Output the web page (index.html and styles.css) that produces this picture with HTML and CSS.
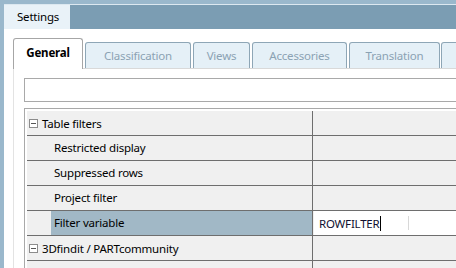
FILE: index.html
```html
<!DOCTYPE html>
<html lang="en">
<head>
    <meta charset="UTF-8">
    <title>Settings</title>
    <link rel="stylesheet" href="styles.css">
</head>
<body>
    <div class="window">
        <div class="titlebar">
            <div class="title-tab">Settings</div>
        </div>
        <div class="content">
            <div class="tabs">
                <div class="tab active">General</div>
                <div class="tab w-class">Classification</div>
                <div class="tab w-views">Views</div>
                <div class="tab w-acc">Accessories</div>
                <div class="tab w-trans">Translation</div>
                <div class="tab w-more"></div>
            </div>
            <div class="panel">
                <div class="search"></div>
                <div class="grid">
                    <div class="row">
                        <div class="name group"><span class="toggle"></span>Table filters</div>
                        <div class="value"></div>
                    </div>
                    <div class="row">
                        <div class="gutter"></div>
                        <div class="name">Restricted display</div>
                        <div class="value"></div>
                    </div>
                    <div class="row">
                        <div class="gutter"></div>
                        <div class="name">Suppressed rows</div>
                        <div class="value"></div>
                    </div>
                    <div class="row">
                        <div class="gutter"></div>
                        <div class="name">Project filter</div>
                        <div class="value"></div>
                    </div>
                    <div class="row selected">
                        <div class="gutter"></div>
                        <div class="name">Filter variable</div>
                        <div class="value">ROWFILTER<span class="caret"></span><span class="ibeam"></span></div>
                    </div>
                    <div class="row">
                        <div class="name group"><span class="toggle"></span>3Dfindit / PARTcommunity</div>
                        <div class="value"></div>
                    </div>
                    <div class="row">
                        <div class="gutter"></div>
                        <div class="name"></div>
                        <div class="value"></div>
                    </div>
                </div>
            </div>
        </div>
    </div>
</body>
</html>
```

FILE: styles.css
```css
body {
    margin: 0;
    width: 456px;
    height: 268px;
    overflow: hidden;
    background-color: #9ab8cc;
    font-family: "Segoe UI", "Noto Sans", sans-serif;
    font-size: 11.5px;
    letter-spacing: -0.2px;
    color: #000;
}

.window {
    margin: 4px 0 0 4px;
    width: 620px;
    border-top: 1px solid #dce8f0;
}

.titlebar {
    display: flex;
    height: 24px;
    background-color: #7b9db3;
}

.title-tab {
    width: 66px;
    padding-left: 13px;
    box-sizing: border-box;
    line-height: 24px;
    background-color: #e9f2f8;
}

.content {
    background-color: #fff;
    padding: 9px 0 0 9px;
    height: 300px;
}

.tabs {
    display: flex;
    align-items: flex-end;
    gap: 2px;
    height: 30px;
}

.tab {
    box-sizing: border-box;
    height: 26px;
    border: 1px solid #8ea6b6;
    border-bottom: none;
    border-radius: 3px 3px 0 0;
    background-color: #e5f0f7;
    color: #8ba2b3;
    font-size: 11.5px;
    text-align: center;
    line-height: 25px;
}

.tab.active {
    width: 70px;
    height: 31px;
    margin-bottom: -1px;
    position: relative;
    border-color: #a6a6a6;
    background-color: #fff;
    color: #000;
    font-weight: bold;
    line-height: 28px;
}

.w-class { width: 106px; }
.w-views { width: 57px; }
.w-acc { width: 95px; }
.w-trans { width: 91px; margin-right: -1px; }
.w-more { width: 60px; }

.panel {
    border-top: 1px solid #d9d9d9;
    border-left: 1px solid #e3e3e3;
    padding: 9px 0 0 10px;
    height: 260px;
}

.search {
    height: 24px;
    box-sizing: border-box;
    border: 1px solid #a9a9a9;
    background-color: #fff;
}

.grid {
    margin-top: 6px;
    border-top: 1px solid #a9a9a9;
    border-left: 1px solid #a9a9a9;
    padding: 2px 0 0 2px;
}

.row {
    display: flex;
    height: 25px;
    box-sizing: border-box;
    border-bottom: 1px solid #6e6e6e;
    background-color: #f0f0f0;
}

.gutter {
    width: 24px;
}

.name {
    width: 262px;
    box-sizing: border-box;
    padding-left: 3px;
    border-right: 1px solid #6e6e6e;
    line-height: 23px;
    white-space: nowrap;
}

.name.group {
    display: flex;
    align-items: center;
    width: 286px;
    padding-left: 2px;
}

.toggle {
    position: relative;
    width: 9px;
    height: 9px;
    box-sizing: border-box;
    border: 1px solid #8c8c8c;
    background-color: #fff;
    margin-right: 4px;
}

.toggle::after {
    content: "";
    position: absolute;
    left: 1px;
    top: 3px;
    width: 5px;
    height: 1px;
    background-color: #555;
}

.value {
    flex: 1;
    display: flex;
    align-items: center;
    line-height: 23px;
}

.selected .name {
    background-color: #a1b8c6;
}

.selected .value {
    margin-left: 1px;
    padding-left: 5px;
    background-color: #fff;
    color: #101030;
}

.caret {
    width: 1px;
    height: 15px;
    background-color: #000;
}

.ibeam {
    width: 1px;
    height: 14px;
    margin-left: 27px;
    background-color: #d8d8d8;
}
```
